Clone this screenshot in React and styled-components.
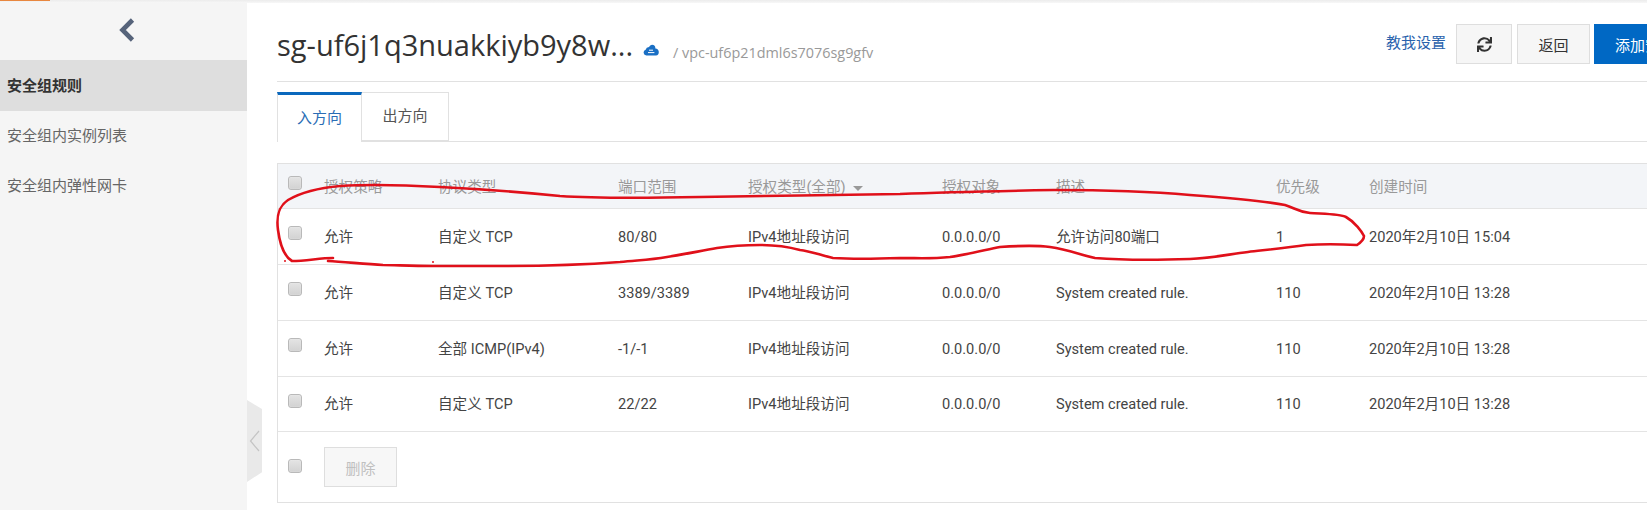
import React from 'react';
import styled, { createGlobalStyle } from 'styled-components';
import { FaSync } from 'react-icons/fa';

const Global = createGlobalStyle`
  html, body {
    margin: 0;
    padding: 0;
    background: #fff;
    overflow: hidden;
  }
  * { box-sizing: border-box; }
`;

const FONT = `"Open Sans", "Noto Sans CJK SC", sans-serif`;
const TABLE_FONT = `Roboto, "Noto Sans CJK SC", sans-serif`;

const Page = styled.div`
  position: relative;
  width: 1647px;
  height: 510px;
  overflow: hidden;
  display: flex;
  font-family: ${FONT};
  font-size: 14px;
  color: #333;
`;

const TopStrip = styled.div`
  position: absolute;
  top: 0;
  left: 0;
  right: 0;
  height: 3px;
  background: linear-gradient(#ececec, #f7f7f7);
  &::before {
    content: '';
    position: absolute;
    left: 0;
    top: 0;
    width: 50px;
    height: 1px;
    background: #e8873f;
  }
`;

const Sidebar = styled.aside`
  flex: 0 0 247px;
  background: #f5f5f5;
  padding-top: 18px;
`;

const BackArrow = styled.div`
  height: 42px;
  display: flex;
  justify-content: center;
  svg { margin-left: 7px; }
`;

const SideItem = styled.div`
  height: ${p => (p.$active ? 51 : 50)}px;
  padding: 0 0 ${p => (p.$active ? 2 : 3)}px 7px;
  display: flex;
  align-items: center;
  font-size: 15px;
  color: ${p => (p.$active ? '#333' : '#666')};
  font-weight: ${p => (p.$active ? 700 : 400)};
  background: ${p => (p.$active ? '#dedede' : 'transparent')};
`;

const Handle = styled.div`
  position: absolute;
  left: 247px;
  top: 400px;
  width: 15px;
  height: 82px;
  background: #e9e9e9;
  clip-path: polygon(0 0, 100% 11%, 100% 88%, 0 100%);
  display: flex;
  align-items: center;
  justify-content: center;
`;

const Main = styled.main`
  flex: 0 0 auto;
  width: 1494px;
  padding-left: 30px;
`;

const HeaderRow = styled.header`
  height: 82px;
  padding-top: 24px;
  display: flex;
  align-items: flex-start;
  border-bottom: 1px solid #e1e1e1;
`;

const Title = styled.h1`
  margin: 1px 0 0;
  font-size: 29px;
  line-height: 40px;
  font-weight: 400;
  color: #333;
  white-space: nowrap;
`;

const CloudMark = styled.svg`
  margin: 20px 0 0 10px;
  flex: none;
`;

const VpcName = styled.span`
  margin: 18px 0 0 14px;
  font-size: 14.4px;
  line-height: 22px;
  color: #999;
  white-space: nowrap;
`;

const Toolbar = styled.div`
  margin-left: auto;
  display: flex;
  align-items: flex-start;
`;

const HelpLink = styled.a`
  font-size: 15px;
  line-height: 40px;
  margin-right: 10px;
  margin-top: -2px;
  color: #2a63ad;
`;

const Btn = styled.button`
  height: 40px;
  width: ${p => p.$w}px;
  margin-right: ${p => p.$gap || 0}px;
  padding: 0;
  font: 15px ${FONT};
  color: ${p => (p.$primary ? '#fff' : '#333')};
  background: ${p => (p.$primary ? '#0068c4' : '#f6f6f6')};
  border: 1px solid ${p => (p.$primary ? '#0068c4' : '#dedede')};
  display: flex;
  align-items: center;
  justify-content: center;
  flex: none;
`;

const Tabs = styled.div`
  margin-top: 10px;
  height: 50px;
  display: flex;
  border-bottom: 1px solid #e1e1e1;
`;

const Tab = styled.div`
  width: ${p => p.$w}px;
  height: ${p => (p.$active ? 50 : 49)}px;
  padding-bottom: 4px;
  display: flex;
  align-items: center;
  justify-content: center;
  font-size: 15px;
  background: #fff;
  color: ${p => (p.$active ? '#2a6db5' : '#555')};
  border: 1px solid #e1e1e1;
  border-left-width: ${p => (p.$active ? 1 : 0)}px;
  border-bottom: ${p => (p.$active ? 0 : 1)}px solid #e1e1e1;
  border-top: ${p => (p.$active ? '3px solid #0b68bd' : '1px solid #e1e1e1')};
`;

const Table = styled.section`
  margin-top: 21px;
  border: 1px solid #e1e1e1;
  height: 340px;
  font-family: ${TABLE_FONT};
  font-size: 14.6px;
`;

const COLS = '46px 114px 180px 130px 194px 114px 220px 93px 300px';

const Row = styled.div`
  display: grid;
  grid-template-columns: ${COLS};
  align-items: center;
  height: ${p => p.$h}px;
  border-bottom: 1px solid #e4e4e4;
  background: ${p => (p.$head ? '#f3f5f8' : '#fff')};
  color: ${p => (p.$head ? '#999' : '#444')};
  white-space: nowrap;
`;

const Check = styled.span`
  display: block;
  width: 14px;
  height: 14px;
  margin: -7px 0 0 10px;
  border: 1px solid #b9b9b9;
  border-radius: 3px;
  background: linear-gradient(#e4e4e4, #d2d2d2);
  box-shadow: inset 0 0 1px #fff;
`;

const Cell = styled.div`
  line-height: 20px;
  padding-top: ${p => (p.$head ? 2 : 0)}px;
`;

const Caret = styled.i`
  display: inline-block;
  margin-left: 7px;
  vertical-align: 1px;
  border-left: 5px solid transparent;
  border-right: 5px solid transparent;
  border-top: 5px solid #999;
`;

const FootRow = styled.div`
  display: flex;
  height: 69px;
  align-items: flex-start;
  padding: 15px 0 0 0;
`;

const FootCheck = styled(Check)`
  margin: 12px 22px 0 10px;
`;

const DeleteBtn = styled.button`
  width: 73px;
  height: 40px;
  padding: 0;
  font: 15px ${FONT};
  color: #c0c0c0;
  background: #f7f7f7;
  border: 1px solid #dedede;
`;

const Scribble = styled.svg`
  position: absolute;
  left: 0;
  top: 0;
  pointer-events: none;
`;

const rules = [
  ['自定义 TCP', '80/80', '0.0.0.0/0', '允许访问80端口', '1', '2020年2月10日 15:04'],
  ['自定义 TCP', '3389/3389', '0.0.0.0/0', 'System created rule.', '110', '2020年2月10日 13:28'],
  ['全部 ICMP(IPv4)', '-1/-1', '0.0.0.0/0', 'System created rule.', '110', '2020年2月10日 13:28'],
  ['自定义 TCP', '22/22', '0.0.0.0/0', 'System created rule.', '110', '2020年2月10日 13:28'],
];

const heads = ['授权策略', '协议类型', '端口范围', '授权类型(全部)', '授权对象', '描述', '优先级', '创建时间'];

const sideItems = ['安全组规则', '安全组内实例列表', '安全组内弹性网卡'];

export default function App() {
  return (
    <Page>
      <Global />
      <Sidebar>
        <BackArrow>
          <svg width="16" height="24" viewBox="0 0 16 24">
            <path d="M13.5 2 L3.5 12 L13.5 22" fill="none" stroke="#56637a" strokeWidth="4.6" />
          </svg>
        </BackArrow>
        {sideItems.map((s, i) => (
          <SideItem key={s} $active={i === 0}>{s}</SideItem>
        ))}
      </Sidebar>

      <Main>
        <HeaderRow>
          <Title>sg-uf6j1q3nuakkiyb9y8w...</Title>
          <CloudMark width="16" height="12" viewBox="0 0 16 12">
            <path d="M3.4 11.5 A3 3 0 0 1 2.6 5.7 A3.6 3.6 0 0 1 6 3 A4 4 0 0 1 9 .8 A3.6 3.6 0 0 1 12.4 4.4 A3.6 3.6 0 0 1 13 11.5 Z" fill="#1a6fc4" />
            <path d="M6 6.2 L10 6.2 M5 8.6 L11.4 8.6" stroke="#fff" strokeWidth="1" />
          </CloudMark>
          <VpcName>/ vpc-uf6p21dml6s7076sg9gfv</VpcName>
          <Toolbar>
            <HelpLink>教我设置</HelpLink>
            <Btn $w={56} $gap={5}><FaSync size={15} color="#333" /></Btn>
            <Btn $w={73} $gap={4}>返回</Btn>
            <Btn $w={147} $primary>添加安全组规则</Btn>
          </Toolbar>
        </HeaderRow>

        <Tabs>
          <Tab $w={85} $active>入方向</Tab>
          <Tab $w={87}>出方向</Tab>
        </Tabs>

        <Table>
          <Row $h={45} $head>
            <Check />
            {heads.map((h, i) => (
              <Cell key={h} $head>{h}{i === 3 && <Caret />}</Cell>
            ))}
          </Row>
          {rules.map((r, i) => (
            <Row key={i} $h={i === 3 ? 55 : 56}>
              <Check />
              <Cell>允许</Cell>
              <Cell>{r[0]}</Cell>
              <Cell>{r[1]}</Cell>
              <Cell>IPv4地址段访问</Cell>
              <Cell>{r[2]}</Cell>
              <Cell>{r[3]}</Cell>
              <Cell>{r[4]}</Cell>
              <Cell>{r[5]}</Cell>
            </Row>
          ))}
          <FootRow>
            <FootCheck />
            <DeleteBtn disabled>删除</DeleteBtn>
          </FootRow>
        </Table>
      </Main>

      <Handle>
        <svg width="11" height="22" viewBox="0 0 11 22">
          <path d="M10 1 L1.5 11 L10 21" fill="none" stroke="#c4c4c4" strokeWidth="1.2" />
        </svg>
      </Handle>

      <TopStrip />

      {/* hand drawn annotation over the first rule */}
      <Scribble width="1647" height="510" viewBox="0 0 1647 510">
        <path
          d="M333 258 C320 258 306 261 292 261 C285 257 280 245 278 230 C276 215 279 206 288 200 C300 193 318 188 340 186 C370 184 405 185 440 187 C480 189 520 192 560 196 C590 198 650 198 700 197 C750 196 850 195 900 194 C950 192 1000 191 1054 190 C1100 190 1145 191 1190 195 C1230 198 1265 201 1285 205 C1295 208 1298 212 1310 213 C1325 214 1340 214 1346 217 C1355 222 1362 232 1364 236 C1364 240 1360 243 1357 245 C1340 244 1320 244 1306 245 C1285 248 1265 250 1248 252 C1225 255 1210 258 1190 259 C1160 260 1120 260 1095 258 C1080 255 1070 250 1050 247 C1035 245 1015 246 1000 247 C985 250 965 255 950 257 C930 259 920 258 900 258 C870 259 850 259 833 258 C820 255 810 251 800 250 C785 246 770 245 760 245 C740 245 730 246 717 248 C695 252 680 255 667 257 C650 260 640 260 620 262 C580 265 540 266 500 266 C470 266 450 266 433 266 C410 266 395 265 383 265 C365 264 345 262 328 261"
          fill="none"
          stroke="#e0101a"
          strokeWidth="2.6"
          strokeLinecap="round"
        />
        <circle cx="285" cy="261" r="1" fill="#e0101a" />
        <circle cx="433" cy="262" r="1" fill="#e0101a" />
      </Scribble>
    </Page>
  );
}
